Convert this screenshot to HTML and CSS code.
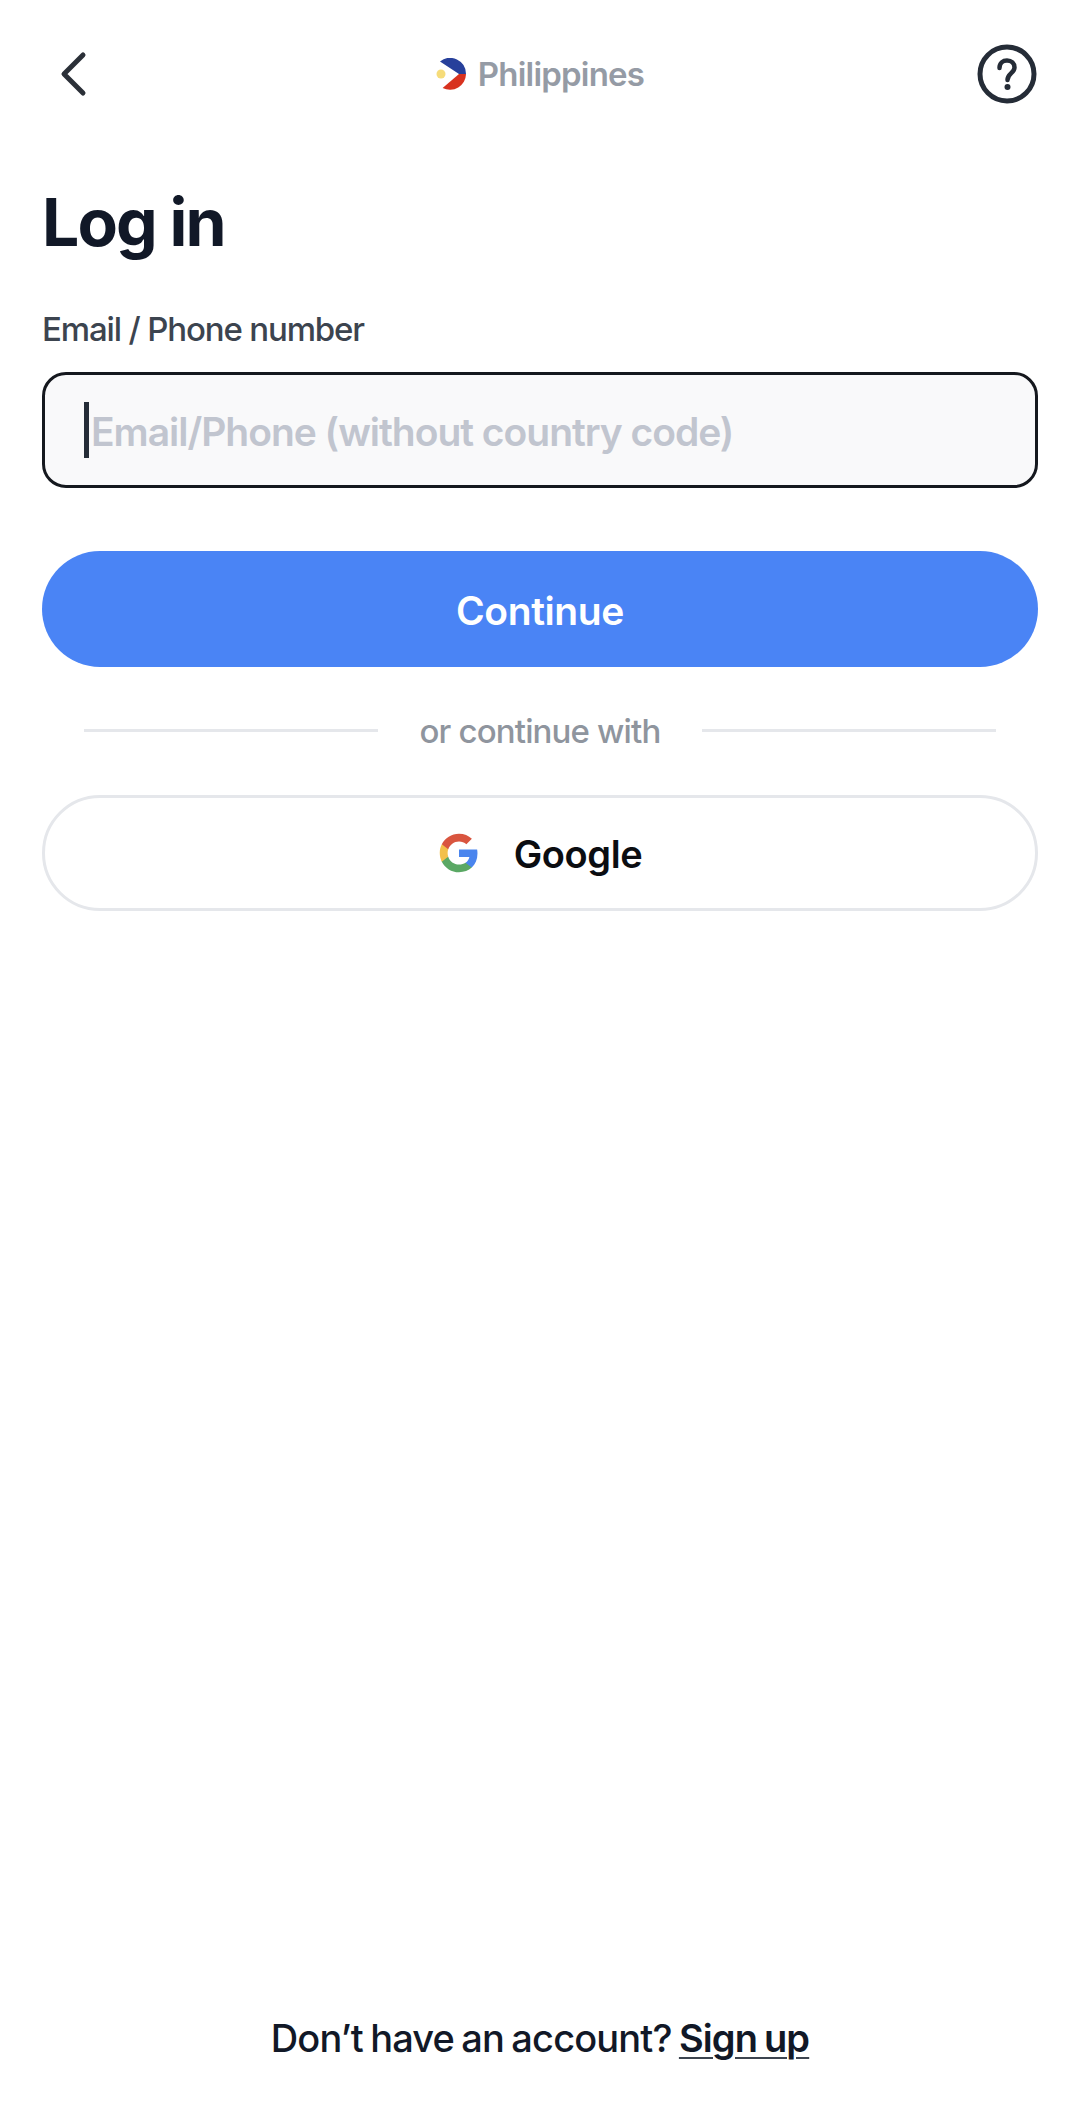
FILE: index.html
```html
<!DOCTYPE html>
<html lang="en">
<head>
    <meta charset="UTF-8">
    <meta name="viewport" content="width=device-width, initial-scale=1.0">
    <title>Log in</title>
    <link rel="stylesheet" href="styles.css">
</head>
<body>
    <div class="page">
        <header class="top-bar">
            <a class="back-btn" href="#" aria-label="Back">
                <svg width="30" height="48" viewBox="0 0 30 48" fill="none">
                    <path d="M25 5 L6 24 L25 43" stroke="#2b3038" stroke-width="5" stroke-linecap="round" stroke-linejoin="round"/>
                </svg>
            </a>
            <div class="region">
                <svg class="region-flag" width="32" height="32" viewBox="0 0 32 32">
                    <path d="M4 3.5 A16 16 0 0 1 30 16 H23 Z" fill="#27409b"/>
                    <path d="M30 16 A16 16 0 0 1 6.6 30 L23 16 Z" fill="#d8321f"/>
                    <circle cx="5" cy="16" r="4.5" fill="#f6dc7a"/>
                </svg>
                <span>Philippines</span>
            </div>
            <a class="help-btn" href="#" aria-label="Help">
                <svg width="60" height="60" viewBox="0 0 60 60" fill="none">
                    <circle cx="30" cy="30" r="27" stroke="#252c37" stroke-width="5"/>
                    <path d="M22.5 24 C22.5 19 26 16.5 30 16.5 C34.5 16.5 37.5 19.5 37.5 23.5 C37.5 29 30.5 29.5 30.5 36" stroke="#252c37" stroke-width="4.5" stroke-linecap="round"/>
                    <circle cx="30.5" cy="43" r="3" fill="#252c37"/>
                </svg>
            </a>
        </header>

        <main class="form">
            <h1 class="form-title">Log in</h1>
            <label class="field-label" for="account">Email / Phone number</label>
            <div class="field">
                <span class="caret"></span>
                <input id="account" class="field-input" type="text" placeholder="Email/Phone (without country code)">
            </div>
            <button class="btn btn-primary" type="button">Continue</button>
            <div class="divider">
                <span class="divider-line"></span>
                <span class="divider-text">or continue with</span>
                <span class="divider-line"></span>
            </div>
            <button class="btn btn-google" type="button">
                <svg width="42" height="42" viewBox="0 0 24 24">
                    <path d="M22.56 12.25c0-.78-.07-1.53-.2-2.25H12v4.26h5.92c-.26 1.37-1.04 2.53-2.21 3.31v2.77h3.57c2.08-1.92 3.28-4.74 3.28-8.09z" fill="#4a85ee"/>
                    <path d="M12 23c2.97 0 5.46-.98 7.28-2.66l-3.57-2.77c-.98.66-2.23 1.06-3.71 1.06-2.86 0-5.29-1.93-6.16-4.53H2.18v2.84C3.99 20.53 7.7 23 12 23z" fill="#5aa864"/>
                    <path d="M5.84 14.09c-.22-.66-.35-1.36-.35-2.09s.13-1.43.35-2.09V7.07H2.18C1.43 8.55 1 10.22 1 12s.43 3.45 1.18 4.93l2.85-2.22.81-.62z" fill="#f3c04a"/>
                    <path d="M12 5.38c1.62 0 3.06.56 4.21 1.64l3.15-3.15C17.45 2.09 14.97 1 12 1 7.7 1 3.99 3.47 2.18 7.07l3.66 2.84c.87-2.6 3.3-4.53 6.16-4.53z" fill="#d9553f"/>
                </svg>
                <span>Google</span>
            </button>
        </main>

        <footer class="signup">
            Don’t have an account? <a href="#">Sign up</a>
        </footer>
    </div>
</body>
</html>
```

FILE: styles.css
```css
* {
    margin: 0;
    padding: 0;
    box-sizing: border-box;
}

body {
    background: #fff;
    font-family: Inter, "Noto Sans", sans-serif;
    color: #111827;
}

.page {
    min-height: 2126px;
    display: flex;
    flex-direction: column;
}

.top-bar {
    height: 148px;
    padding: 0 43px;
    display: grid;
    grid-template-columns: 1fr auto 1fr;
    align-items: center;
}

.back-btn,
.help-btn {
    display: flex;
}

.back-btn {
    padding-left: 15px;
}

.help-btn {
    justify-content: flex-end;
}

.region {
    display: flex;
    align-items: center;
    gap: 10px;
    font-size: 33px;
    font-weight: 600;
    letter-spacing: -0.8px;
    color: #959ba5;
}

.form {
    padding: 0 42px;
    display: flex;
    flex-direction: column;
}

.form-title {
    margin-top: 33px;
    font-size: 66px;
    line-height: 82px;
    font-weight: 700;
    letter-spacing: -1.9px;
}

.field-label {
    margin-top: 46px;
    font-size: 33px;
    line-height: 40px;
    font-weight: 500;
    letter-spacing: -1.15px;
    color: #3c444f;
}

.field {
    margin-top: 23px;
    height: 116px;
    padding: 0 39px;
    display: flex;
    align-items: center;
    gap: 2px;
    background: #f9f9fa;
    border: 3px solid #15181e;
    border-radius: 24px;
}

.caret {
    flex: none;
    width: 5px;
    height: 56px;
    background: #252c37;
}

.field-input {
    flex: 1;
    min-width: 0;
    padding-top: 3px;
    border: none;
    outline: none;
    background: transparent;
    font-family: inherit;
    font-size: 39px;
    font-weight: 600;
    letter-spacing: -1.02px;
    color: #111827;
}

.field-input::placeholder {
    color: #c1c5cf;
    opacity: 1;
}

.btn {
    width: 100%;
    height: 116px;
    display: flex;
    align-items: center;
    justify-content: center;
    border-radius: 58px;
    font-family: inherit;
    cursor: pointer;
}

.btn-primary {
    margin-top: 63px;
    padding-top: 3px;
    border: none;
    background: #4a84f5;
    color: #fff;
    font-size: 39px;
    font-weight: 600;
    letter-spacing: -0.4px;
}

.divider {
    margin-top: 40px;
    padding: 0 42px;
    display: flex;
    align-items: center;
    gap: 42px;
}

.divider-line {
    flex: 1;
    height: 3px;
    background: #e5e7eb;
}

.divider-text {
    padding-top: 2px;
    font-size: 33px;
    line-height: 44px;
    font-weight: 500;
    letter-spacing: -0.85px;
    color: #8f959e;
}

.btn-google {
    margin-top: 42px;
    gap: 34px;
    background: #fff;
    border: 3px solid #e5e7eb;
    color: #0b0d11;
    font-size: 38px;
    font-weight: 600;
    letter-spacing: -0.4px;
}

.btn-google span {
    padding-top: 2px;
}

.signup {
    margin-top: auto;
    padding-bottom: 65px;
    text-align: center;
    font-size: 38px;
    line-height: 46px;
    font-weight: 500;
    letter-spacing: -0.85px;
    word-spacing: -2px;
    color: #111827;
}

.signup a {
    font-weight: 600;
    color: #111827;
    text-decoration-color: #3c444f;
    text-decoration-thickness: 2px;
    text-underline-offset: 5px;
}
```
